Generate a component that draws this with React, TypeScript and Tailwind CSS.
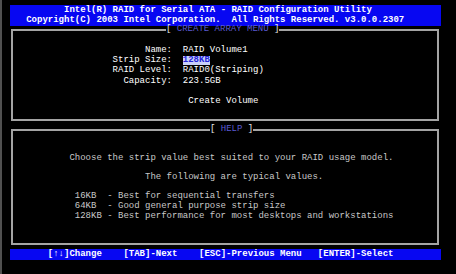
const mono = { fontFamily: '"Liberation Mono", "DejaVu Sans Mono", monospace' };

function TitleRow({ title, left, className }: { title: string; left: string; className: string }) {
  return (
    <div className={`flex h-[12px] ${className}`}>
      <div className={`${left} h-[7px] self-end border-t-2 border-l-2 border-[#a4a4a4]`} />
      <div className="whitespace-pre leading-[12px] h-[12px] -mt-[1px]">
        <span className="text-[#e6e6e6]">[ </span>
        <span className="text-[#5a5ad0]">{title}</span>
        <span className="text-[#e6e6e6]"> ]</span>
      </div>
      <div className="flex-1 h-[7px] self-end border-t-2 border-r-2 border-[#a4a4a4]" />
    </div>
  );
}

function Field({ label, children }: { label: string; children: React.ReactNode }) {
  return (
    <div className="flex h-[10.2px] leading-[10.2px]">
      <span className="w-[159px] text-right">{label}</span>
      <span className="ml-[10.8px]">{children}</span>
    </div>
  );
}

export default function App() {
  return (
    <div
      className="w-[456px] h-[274px] bg-black border-l-2 border-[#505050] pt-[5px] text-[9px] overflow-hidden"
      style={mono}
    >
      <div className="ml-[8px] w-[431px] h-[21px] bg-[#0707f2] text-white font-bold whitespace-pre">
        <div className="h-[10px] leading-[10px] pl-[54px]">
          Intel(R) RAID for Serial ATA - RAID Configuration Utility
        </div>
        <div className="h-[11px] leading-[11px] pl-[16.2px]">
          Copyright(C) 2003 Intel Corporation.  All Rights Reserved. v3.0.0.2307
        </div>
      </div>

      <div className="ml-[9px] w-[428px]">
        <TitleRow title="CREATE ARRAY MENU" left="w-[155px]" className="-mt-[2px]" />
        <div className="h-[85px] border-x-2 border-b-2 border-[#a4a4a4] pt-[9px] text-white">
          <Field label="Name:">RAID Volume1</Field>
          <Field label="Strip Size:">
            <span className="inline-block h-[9px] leading-[9px] bg-[#c8d0fa] text-[#2424d8] font-bold">128KB</span>
          </Field>
          <Field label="RAID Level:">RAID0(Striping)</Field>
          <Field label="Capacity:">223.5GB</Field>
          <div className="h-[10.2px]" />
          <Field label="">
            <span className="pl-[5.4px]">Create Volume</span>
          </Field>
        </div>

        <TitleRow title="HELP" left="w-[199px]" className="mt-[3px]" />
        <div className="h-[109px] border-x-2 border-b-2 border-[#a4a4a4] pt-[18px] pl-[2.4px] text-[#c8c8c8] whitespace-pre leading-[9.6px]">
          <div className="h-[9.6px]">{"          Choose the strip value best suited to your RAID usage model."}</div>
          <div className="h-[9.6px]" />
          <div className="h-[9.6px]">{"                        The following are typical values."}</div>
          <div className="h-[9.6px]" />
          <div className="h-[9.6px]">{"           16KB  - Best for sequential transfers"}</div>
          <div className="h-[9.6px]">{"           64KB  - Good general purpose strip size"}</div>
          <div className="h-[9.6px]">{"           128KB - Best performance for most desktops and workstations"}</div>
        </div>
      </div>

      <div className="mt-[4px] ml-[8px] w-[431px] h-[11px] leading-[11px] bg-[#0707f2] text-white font-bold whitespace-pre pl-[37.8px]">
        {"[↑↓]Change    [TAB]-Next    [ESC]-Previous Menu   [ENTER]-Select"}
      </div>
    </div>
  );
}
